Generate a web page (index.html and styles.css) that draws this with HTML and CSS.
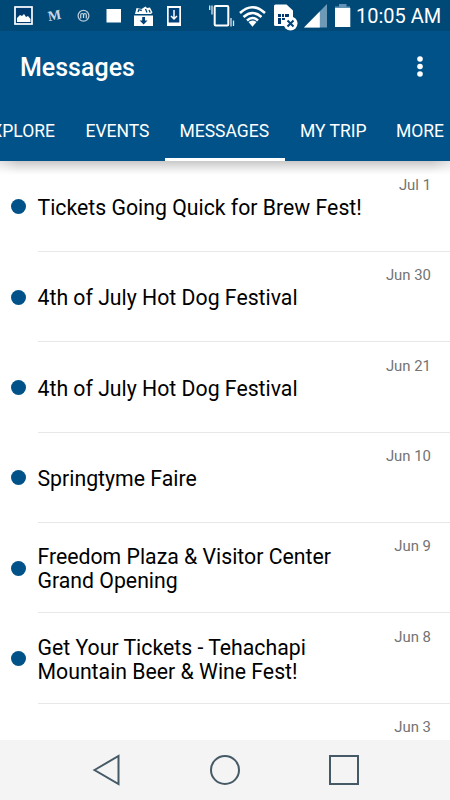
FILE: index.html
```html
<!DOCTYPE html>
<html lang="en">
<head>
<meta charset="utf-8">
<title>Messages</title>
<link rel="stylesheet" href="styles.css">
</head>
<body>
<div class="screen">
  <header class="status">
    <svg class="status-icons" width="352" height="31" viewBox="0 0 352 31" aria-hidden="true">
      <!-- picture -->
      <rect x="15" y="7" width="17" height="17" fill="#003b70" stroke="#fff" stroke-width="1.7"/>
      <path d="M17 22v-4l3-3 2 1 2-2 2 3 2-1 2.500 3v3z" fill="#fff"/>
      <!-- swirl ring -->
      <circle cx="83.500" cy="15.800" r="5.400" fill="none" stroke="#b5cadb" stroke-width="1.300"/>
      <path d="M80.700 18.500v-3.500q0-1.500 1.400-1.500t1.400 1.500v3q0-4.500 1.400-4.500t1.400 1.500v3.500" fill="none" stroke="#c8d8e4" stroke-width="1.200"/>
      <rect x="106.500" y="9" width="14.500" height="13.500" fill="#fff"/>
      <!-- app updates -->
      <path d="M135 14l1.500-6 5 1 4-2.500 1.500 1.500 3-.5 2.500 5-1.500 1.500z" fill="#fff"/>
      <path d="M138 12l.8-2.300 3 .8M145.500 9l1.500 3.500M149 10l1.200 2.500" fill="none" stroke="#004876" stroke-width="1.300"/>
      <rect x="134" y="15.500" width="19" height="10.500" fill="#fff"/>
      <path d="M142.200 17h2.800v3.500h2.500l-3.900 4-3.900-4h2.500z" fill="#004078"/>
      <!-- download -->
      <path d="M167 6h14v20h-14z" fill="#fff"/>
      <path d="M168.700 8h10.600v14.500h-10.600z" fill="#004078"/>
      <path d="M174 10v8.500M171 16l3 3 3-3" fill="none" stroke="#fff" stroke-width="1.500"/>
      <!-- vibrate -->
      <rect x="214.700" y="6" width="13.600" height="19.500" rx="1" fill="none" stroke="#fff" stroke-width="2"/>
      <path d="M212 5.500v9M209.700 5.500v4.500M231 18v8.500M233.500 20.500v5.500" fill="none" stroke="#dce6ee" stroke-width="1.300"/>
      <!-- wifi -->
      <path d="M240 13q12.500-11.500 25 0M243.500 17q9-8 18 0M247 20.500q5.500-5 11 0" fill="none" stroke="#fff" stroke-width="2.500"/>
      <path d="M248.500 22q4-3 8 0l-4 4.700z" fill="#fff"/>
      <!-- SIM -->
      <path d="M275.500 4.500h11l6.500 6v15.500h-17.500q-1.500 0-1.500-1.500v-18.500q0-1.500 1.500-1.500z" fill="#fff"/>
      <path d="M278 14h3v3h-3zM282 14h2v3h-2zM285 14h4v3h-4zM278 18h3v6h-3zM282 18h3v2h-3z" fill="#00366f"/>
      <circle cx="290.500" cy="23.500" r="7" fill="#fff"/>
      <path d="M287.500 20.500l6 6M293.500 20.500l-6 6" stroke="#00447b" stroke-width="2"/>
      <!-- signal -->
      <path d="M304 27.500L327 4v23.500z" fill="#6e9ab8"/>
      <path d="M304 27.500L319.800 11.500v16z" fill="#fff"/>
      <!-- battery -->
      <path d="M339 4h7.500v2.500h3.500v1.500h-15v-1.500h4z" fill="#6393b4"/>
      <rect x="335" y="8" width="15.300" height="19" fill="#fff"/>
    </svg>
    <span class="mail">M</span>
    <time class="clock">10:05 AM</time>
  </header>
  <div class="appbar">
    <div class="toolbar">
      <h1>Messages</h1>
      <svg width="6" height="22" viewBox="0 0 6 22" aria-label="More options"><g fill="#fff"><circle cx="3" cy="3" r="2.800"/><circle cx="3" cy="10.500" r="2.800"/><circle cx="3" cy="18" r="2.800"/></g></svg>
    </div>
    <nav class="tabs">
      <a class="tab explore">EXPLORE</a>
      <a class="tab events">EVENTS</a>
      <a class="tab messages active">MESSAGES</a>
      <a class="tab trip">MY TRIP</a>
      <a class="tab more">MORE</a>
    </nav>
  </div>
  <main class="list">
    <article class="row"><i class="dot"></i><div class="body"><h2>Tickets Going Quick for Brew Fest!</h2><time>Jul 1</time></div></article>
    <article class="row"><i class="dot"></i><div class="body"><h2>4th of July Hot Dog Festival</h2><time>Jun 30</time></div></article>
    <article class="row"><i class="dot"></i><div class="body"><h2>4th of July Hot Dog Festival</h2><time>Jun 21</time></div></article>
    <article class="row"><i class="dot"></i><div class="body"><h2>Springtyme Faire</h2><time>Jun 10</time></div></article>
    <article class="row"><i class="dot"></i><div class="body"><h2>Freedom Plaza &amp; Visitor Center<br>Grand Opening</h2><time>Jun 9</time></div></article>
    <article class="row"><i class="dot"></i><div class="body"><h2>Get Your Tickets - Tehachapi<br>Mountain Beer &amp; Wine Fest!</h2><time>Jun 8</time></div></article>
    <article class="row"><div class="body"><time>Jun 3</time></div></article>
  </main>
  <footer class="navbar">
    <svg width="30" height="32" viewBox="0 0 30 32"><path d="M3.500 16L27.500 2v28z"/></svg>
    <svg width="32" height="32" viewBox="0 0 32 32"><circle cx="16" cy="16" r="14"/></svg>
    <svg width="32" height="32" viewBox="0 0 32 32"><rect x="2" y="2" width="28" height="28"/></svg>
  </footer>
</div>
</body>
</html>
```
FILE: styles.css
```css
* { box-sizing: border-box; }
body { margin: 0; font-family: Roboto, sans-serif; background: #fff; }
.screen { width: 450px; height: 800px; display: flex; flex-direction: column; overflow: hidden; }
.status { height: 31px; flex: none; background: #004876; color: #fff; display: flex; align-items: center; position: relative; }
.status-icons { flex: none; }
.mail { position: absolute; left: 48px; top: 7px; font: bold 14px/18px "Liberation Serif", serif; color: #c8d8e4; transform: rotate(-10deg); }
.clock { margin-left: 4px; font-size: 20px; line-height: 31px; white-space: nowrap; padding-top: 2px; }
.appbar { height: 130px; flex: none; background: #005289; color: #fff; position: relative; z-index: 1; }
.appbar::after { content: ""; position: absolute; left: 0; right: 0; top: 100%; height: 14px; background: linear-gradient(#c9c9c9, #dedede 35%, #f6f6f6 75%, #fff); -webkit-mask-image: linear-gradient(90deg, rgba(0,0,0,.5), #000 18px, #000 432px, rgba(0,0,0,.5)); mask-image: linear-gradient(90deg, rgba(0,0,0,.5), #000 18px, #000 432px, rgba(0,0,0,.5)); }
.toolbar { height: 70px; display: flex; align-items: center; justify-content: space-between; padding: 2px 27px 0 20px; }
h1 { margin: 2px 0 0; font-size: 25px; font-weight: 500; line-height: 30px; }
.tabs { height: 60px; display: flex; margin-left: -29px; }
.tab { flex: none; padding: 0 15px; font-size: 17.5px; line-height: 60px; white-space: nowrap; }
.explore { width: 99px; display: flex; justify-content: flex-end; }
.events { width: 94.500px; padding-left: 15.500px; }
.messages { width: 120.500px; }
.trip { width: 96px; }
.active { border-bottom: 3px solid #fff; }
.list { flex: 1; min-height: 0; overflow: hidden; padding-top: .5px; }
.row { height: 90.400px; display: flex; align-items: center; padding-left: 11px; }
.dot { flex: none; width: 15px; height: 15px; border-radius: 50%; background: #005289; margin-right: 11.500px; }
.body { flex: 1; height: 100%; display: flex; align-items: center; justify-content: space-between; border-bottom: 1px solid #e8e8e8; padding-right: 19px; }
h2 { margin: 3px 0 0; font-size: 21.250px; line-height: 23.800px; font-weight: 400; color: #000; white-space: nowrap; }
.body time { align-self: flex-start; margin-top: 13.400px; margin-left: auto; font-size: 14.900px; line-height: 20px; color: #737373; white-space: nowrap; }
.navbar { height: 60px; flex: none; background: #f4f4f4; display: grid; grid-template-columns: 118px 119px 119px; padding-left: 47px; justify-items: center; align-items: center; }
.navbar svg { fill: none; stroke: #455a66; stroke-width: 2; }
```
